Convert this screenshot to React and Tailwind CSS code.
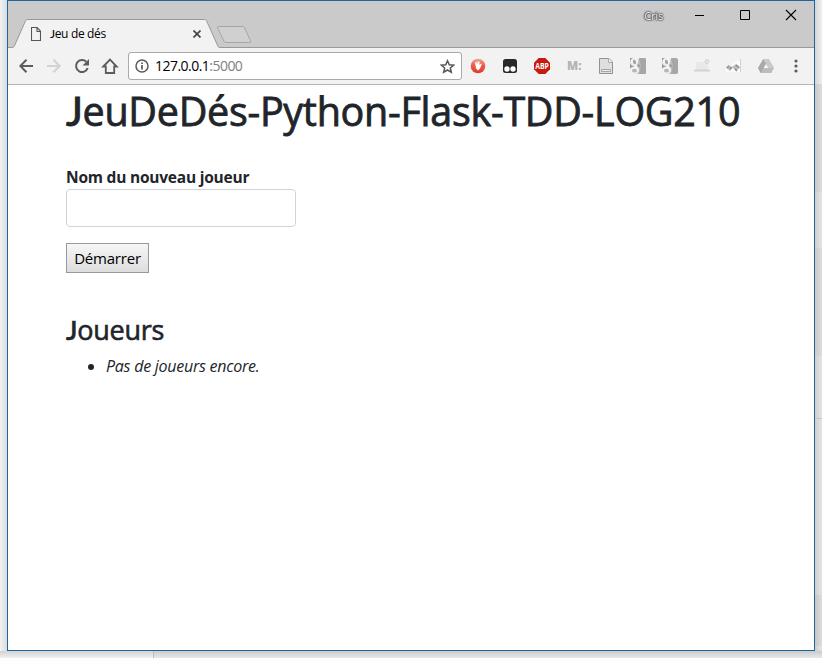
function TabStrip() {
  return (
    <header className="relative flex h-[47px] shrink-0 bg-[#cacaca]">
      <svg className="absolute left-0 top-0" width="806" height="47" viewBox="8 1 806 47">
        <path d="M8 47.5H814" stroke="#999" fill="none" />
        <path d="M8 48V47.5H12Q13.7 47.5 14.4 46L25.5 20.8Q26 19.5 27.5 19.5H204.5Q206 19.5 206.6 20.8L217.8 46Q218.5 47.5 220 47.5V48Z" fill="#f2f2f2" />
        <path d="M8 47.5H12Q13.7 47.5 14.4 46L25.5 20.8Q26 19.5 27.5 19.5H204.5Q206 19.5 206.6 20.8L217.8 46Q218.5 47.5 220 47.5" fill="none" stroke="#999" />
        <path d="M219 26.5H242.5Q244 26.5 244.6 27.8L250.6 41Q251.2 42.5 249.6 42.5H226Q224.5 42.5 223.8 41L217.6 28.2Q217 26.5 219 26.5Z" fill="#d0d0d0" stroke="#a6a6a6" />
      </svg>
      <div className="relative ml-[23px] mt-[19px] flex h-7 w-[170px] items-center">
        <svg width="10" height="14" viewBox="0 0 10 14" fill="none" stroke="#555" strokeWidth="1.1">
          <path d="M.5.5H6L9.5 4V13.5H.5ZM6 .5V4.5H9.5" />
        </svg>
        <span className="ml-[9px] text-[12px] leading-4 tracking-[-0.35px] text-black"><span className="font-[Lato]">J</span>eu de dés</span>
        <svg className="ml-auto" width="8" height="8" viewBox="0 0 8 8" stroke="#444" strokeWidth="1.7">
          <path d="M.5.5l7 7M7.5.5l-7 7" />
        </svg>
      </div>
      <div className="relative ml-auto flex h-[29px] items-center pr-[17px]">
        <span className="mr-[32px] text-[11px] leading-4 tracking-[-0.2px] text-white [text-shadow:0_0_1px_#333,0_0_1px_#333,0_0_2px_#333,0_0_2px_#333]">Cris</span>
        <svg className="-mt-px" width="102" height="12" viewBox="0 0 102 12" fill="none" stroke="#000">
          <path d="M0 6.5H9" />
          <path d="M45.5 1.5H54.5V10.5H45.5Z" />
          <path d="M91 1L101 11M101 1L91 11" strokeWidth="1.1" />
        </svg>
      </div>
    </header>
  );
}

function GoogleBadge({ rounded }) {
  return (
    <svg width="16" height="16" viewBox="0 0 16 16">
      <rect width="16" height="16" rx={rounded ? 2.5 : 0} fill="#bdbdbd" />
      <path d="M9 0H13.5Q16 0 16 2.5V13.5Q16 16 13.5 16H9L11 8Z" fill="#a6a6a6" />
      <path d="M0 0H2L1 7L3 8L0 10ZM8 6L11 8L8 9Z" fill="#999" />
      <path d="M4.3 0H9.5L8.3 1.5Q9 4.5 7 6.5Q6 7.8 7.5 9Q10 11 8.5 14Q7.8 15.5 6 16H0V11Q1.5 9 4.3 9Q3.5 8.5 3.7 7.5Q0 7.5 .2 3.8Q.5 .5 4.3 0Z" fill="#f3f3f3" />
      <ellipse cx="4.5" cy="4" rx="1.5" ry="2.3" transform="rotate(-15 4.5 4)" fill="#a4a4a4" />
      <ellipse cx="4.5" cy="12.7" rx="2.5" ry="1.9" fill="#b5b5b5" />
    </svg>
  );
}

function Extensions() {
  return (
    <div className="ml-[8px] flex items-center gap-4">
      <svg width="16" height="16" viewBox="0 0 16 16">
        <defs>
          <linearGradient id="redGloss" x2="0" y2="1">
            <stop stopColor="#f3a294" /><stop offset=".5" stopColor="#ec5847" /><stop offset="1" stopColor="#e03b29" />
          </linearGradient>
        </defs>
        <circle cx="8" cy="8" r="7.3" fill="url(#redGloss)" />
        <path d="M5 4.5L6 4L6.5 6.5V3.5H7.5V6L8.5 3.3L9.5 3.5V7L11 5.5L11.7 6.3L10 10.5L8 12.5L6 10.5Z" fill="#fff" />
      </svg>
      <svg width="16" height="16" viewBox="0 0 16 16">
        <rect x="1" y="1" width="14" height="14" rx="2.5" fill="#282828" />
        <circle cx="5" cy="11" r="2.7" fill="#fff" /><circle cx="11" cy="11" r="2.7" fill="#fff" />
      </svg>
      <svg className="overflow-visible" width="16" height="16" viewBox="0 0 16 16">
        <path d="M4.7 0H11.3L16 4.7V11.3L11.3 16H4.7L0 11.3V4.7Z" fill="#c8190f" />
        <text x="1.2" y="11" fontSize="8.5" fontWeight="700" textLength="13.6" lengthAdjust="spacingAndGlyphs" fill="#fff">ABP</text>
      </svg>
      <svg className="overflow-visible" width="16" height="16" viewBox="0 0 16 16">
        <text x="1" y="12" fontSize="11.5" fontWeight="800" textLength="14.5" lengthAdjust="spacingAndGlyphs" fill="#b3b3b3">M:</text>
      </svg>
      <svg width="16" height="16" viewBox="0 0 16 16">
        <path d="M1.5.5H11L14.5 4V15.5H1.5Z" fill="#dedede" stroke="#929292" />
        <path d="M10.5.5V4.5H14.5" fill="#f4f4f4" stroke="#aaa" />
        <path d="M3.5 11.5H12.5V13.5H3.5Z" fill="#ededed" stroke="#a5a5a5" />
      </svg>
      <GoogleBadge />
      <GoogleBadge rounded />
      <svg width="16" height="16" viewBox="0 0 16 16">
        <path d="M2 4H14V12H2Z" fill="#e8e8e8" />
        <path d="M0 12.5H16" stroke="#d2d2d2" strokeWidth="2" />
        <circle cx="13" cy="3.5" r="1.9" fill="#e8e8e8" stroke="#cfcfcf" />
      </svg>
      <svg width="16" height="16" viewBox="0 0 16 16">
        <path d="M9 4L14 2V14H0V10Z" fill="#fafafa" />
        <path d="M14.5 1V14" stroke="#d2d2d2" />
        <path d="M0 9.5L3 7L6.5 10L4 13ZM6 9L10 6L14 9.5L10 13Z" fill="#bcbcbc" />
        <path d="M1 10L3 8M4 11L6 9M10 7L13 9.5M9 11L11 13" stroke="#888" strokeWidth="1.3" />
      </svg>
      <svg width="16" height="16" viewBox="0 0 16 16">
        <path d="M5.3 1H10.7L16 10L13.3 15H2.7L0 10Z" fill="#bcbcbc" />
        <path d="M5.3 1L8 5.8L2.7 15L0 10Z" fill="#a9a9a9" />
        <path d="M5.3 1H10.7L16 10H10.5Z" fill="#cacaca" />
        <path d="M8 6L10.4 10H5.6Z" fill="#f5f5f5" />
      </svg>
    </div>
  );
}

function Toolbar() {
  return (
    <div className="flex h-[37px] shrink-0 items-center border-b border-[#b5b5b5] bg-[#f2f2f2] pl-[11px]">
      <svg width="100" height="18" viewBox="0 0 100 18" fill="none" stroke="#5a5d60" strokeWidth="2">
        <path d="M14 9H1.5M7.5 2.8L1.3 9L7.5 15.2" />
        <path d="M28 9H40.5M34.5 2.8L40.7 9L34.5 15.2" stroke="#d2d3d4" />
        <path d="M67.3 4.8A6 6 0 1 0 68.7 11" />
        <path d="M70 2V8.5H63.5Z" fill="#5a5d60" stroke="none" />
        <path d="M84.3 9.5L91 2.6L97.7 9.5H95.2V16H86.8V9.5Z" strokeWidth="1.8" />
      </svg>
      <div className="ml-[9px] flex h-7 w-[334px] items-center rounded-[3px] border border-[#a9a9a9] bg-white pl-1.5 pr-[6px]">
        <svg width="14" height="14" viewBox="0 0 14 14" fill="none" stroke="#5a5a5a" strokeWidth="1.5">
          <circle cx="7" cy="7" r="6" />
          <path d="M7 6V10.5M7 3.5V5" strokeWidth="1.7" />
        </svg>
        <span className="ml-[6px] text-[14px] leading-5 tracking-[-0.53px] text-black">127.0.0.1<span className="text-[#808080]">:5000</span></span>
        <svg className="ml-auto" width="15" height="15" viewBox="0 0 15 15" fill="none" stroke="#555" strokeWidth="1.5">
          <path d="M7.5 1.8L9.3 5.8L13.6 6.2L10.3 9L11.3 13.3L7.5 11L3.7 13.3L4.7 9L1.4 6.2L5.7 5.8Z" />
        </svg>
      </div>
      <Extensions />
      <svg className="ml-auto mr-4" width="4" height="14" viewBox="0 0 4 14" fill="#5a5d60">
        <circle cx="2" cy="2" r="1.6" /><circle cx="2" cy="7" r="1.6" /><circle cx="2" cy="12" r="1.6" />
      </svg>
    </div>
  );
}

function Page() {
  return (
    <main className="flex-1 bg-white pl-[58px] text-[#212529]">
      <h1 className="mt-[2px] h-12 whitespace-nowrap text-[39.5px] font-medium leading-[48px] tracking-[-0.28px] [-webkit-text-stroke:0.8px_#212529]"><span className="font-[Lato]">J</span>euDeDés-Python-Flask-TDD-LOG210</h1>
      <form className="mt-[30px] flex flex-col items-start">
        <label htmlFor="joueur" className="h-6 text-[15.5px] font-bold leading-6 tracking-[-0.22px]">Nom du nouveau joueur</label>
        <input id="joueur" className="h-[38px] w-[230px] rounded border border-[#ced4da] px-3 text-[16px]" />
        <button type="button" className="mt-4 h-[30px] w-[83px] whitespace-nowrap border border-[#999] bg-linear-to-b from-[#f6f6f6] to-[#dddddd] text-[15px] leading-6 tracking-[-0.2px] text-black">Démarrer</button>
      </form>
      <h2 className="mt-[40px] h-[34px] text-[27px] font-medium leading-[34px] tracking-[-0.25px] [-webkit-text-stroke:0.6px_#212529]"><span className="font-[Lato]">J</span>oueurs</h2>
      <ul className="mt-[7px] list-disc pl-10 text-[16px] leading-6">
        <li><em className="tracking-[-0.25px]">Pas de joueurs encore.</em></li>
      </ul>
    </main>
  );
}

export default function App() {
  return (
    <div className={'font-["Open_Sans","Noto_Sans",sans-serif] flex h-[658px] w-[822px] flex-col overflow-hidden bg-[#e3e3e3]'}>
      <div className="flex h-[651px]">
        <div className="w-[7px] bg-linear-to-r from-[#f3f3f3] to-[#dcdcdc]" />
        <div className="flex w-[808px] flex-col border border-[#1a67a3]">
          <TabStrip />
          <Toolbar />
          <Page />
        </div>
        <div className="flex w-[7px] flex-col bg-linear-to-r from-[#cfcfcf] to-[#e5e5e5]">
          <div className="h-[84px] shrink-0 bg-linear-to-r from-[#d5d5d5] to-[#f0f0f0]" />
          <div className="h-[108px] shrink-0 bg-linear-to-r from-[#c9cacb] to-[#dcdddf]" />
          <div className="h-[56px] shrink-0" />
          <div className="h-[108px] shrink-0 bg-linear-to-r from-[#c9cacb] to-[#dcdddf]" />
          <div className="h-[62px] shrink-0" />
          <div className="h-px shrink-0 bg-[#c5c5c5]" />
          <div className="h-[176px] shrink-0" />
          <div className="h-[51px] shrink-0 bg-linear-to-r from-[#c5c6c7] to-[#dcdddf]" />
        </div>
      </div>
      <div className="flex h-[7px] bg-linear-to-b from-[#cbcbcb] to-[#e8e8e8]">
        <div className="w-[153px] bg-linear-to-b from-[#d3d3d3] to-[#f0f0f0]" />
        <div className="w-px bg-[#bdbdbd]" />
      </div>
    </div>
  );
}
